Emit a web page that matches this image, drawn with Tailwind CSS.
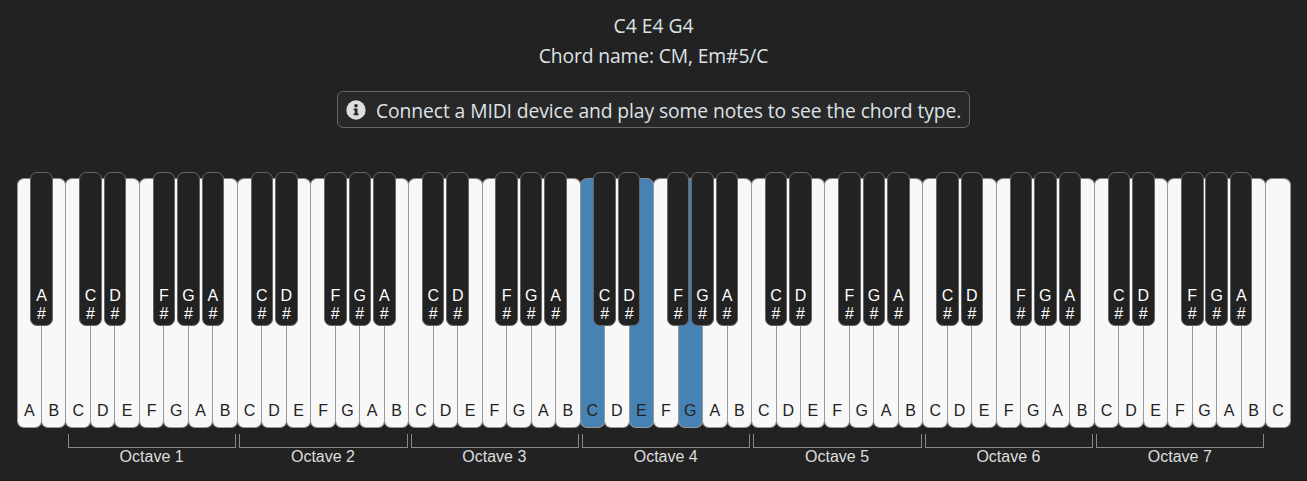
<!DOCTYPE html>
<html lang="en">
<head>
<meta charset="utf-8">
<title>MIDI chord keyboard</title>
<script src="https://cdn.jsdelivr.net/npm/@tailwindcss/browser@4"></script>
</head>
<body class="bg-[#222] w-[1307px] h-[481px] overflow-hidden font-['Liberation_Sans',sans-serif]">
<main class="flex h-[481px] flex-col items-center border-b border-[#1c191b] pt-[11px]">
  <div class="flex flex-col items-center font-['Segoe_UI','Open_Sans',sans-serif] text-[19.3px] leading-[30px] text-[#dee2e6]">
    <p class="whitespace-nowrap">C4 E4 G4</p>
    <p class="whitespace-nowrap tracking-[-0.12px]">Chord name: CM, Em#5/C</p>
    <div class="mt-5 flex h-[37px] w-[633px] items-center rounded-md border border-[#666] bg-[#282828] pl-2">
      <svg class="size-5 shrink-0" viewBox="0 0 20 20"><circle cx="10" cy="10" r="9.7" fill="#dedede"/><circle cx="10" cy="5.8" r="1.8" fill="#282828"/><path fill="#282828" d="M7.6 8.4h3.9v5h1.1v1.8H7.6v-1.8h1.1v-3.2H7.6z"/></svg>
      <p class="ml-[10px] pt-[3px] whitespace-nowrap tracking-[-0.09px]">Connect a MIDI device and play some notes to see the chord type.</p>
    </div>
  </div>
  <div id="keys" class="mt-[50px] flex h-[250px] w-[1273px]"></div>
  <div id="octaves" class="mt-[6px] flex w-[1273px] pl-[48.96px]"></div>
</main>
<script>
const keys = document.getElementById('keys');
const pressed = new Set([23, 25, 27]);
for (let i = 0; i < 52; i++) {
  const n = 'ABCDEFG'[i % 7];
  const k = document.createElement('div');
  k.className = 'relative flex flex-1 items-end justify-center text-base leading-[18px] pb-[8px] text-[#222]';
  k.innerHTML = '<span class="absolute inset-y-0 -left-[0.5px] -right-[0.5px] rounded-[7px] border border-[#999] border-t-[#888] ' +
    (pressed.has(i) ? 'bg-[#4682b4]' : 'bg-[#f8f8f8]') + '"></span><span class="relative">' + n + '</span>';
  if ('ACDFG'.includes(n) && i < 51) {
    k.innerHTML += '<div class="absolute z-10 -top-[6px] -right-[11.25px] flex h-[154px] w-[22.5px] flex-col items-center justify-end rounded-[7px] border border-[#666] bg-[#222] pb-[2px] text-white"><span>' + n + '</span><span>#</span></div>';
  }
  keys.append(k);
}
const row = document.getElementById('octaves');
for (let o = 1; o <= 7; o++) {
  row.innerHTML += '<div class="w-[171.37px] shrink-0 pl-[2px] pr-px text-center text-base leading-[18px] text-[#dedede]"><div class="h-[14px] border border-t-0 border-[#888]"></div><div class="pr-px">Octave ' + o + '</div></div>';
}
</script>
</body>
</html>
